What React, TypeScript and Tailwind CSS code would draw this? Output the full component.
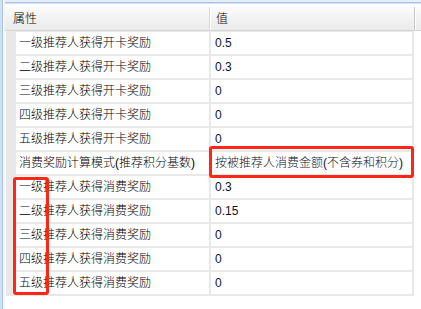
const rows: [string, string][] = [
  ["一级推荐人获得开卡奖励", "0.5"],
  ["二级推荐人获得开卡奖励", "0.3"],
  ["三级推荐人获得开卡奖励", "0"],
  ["四级推荐人获得开卡奖励", "0"],
  ["五级推荐人获得开卡奖励", "0"],
  ["消费奖励计算模式(推荐积分基数)", "按被推荐人消费金额(不含券和积分)"],
  ["一级推荐人获得消费奖励", "0.3"],
  ["二级推荐人获得消费奖励", "0.15"],
  ["三级推荐人获得消费奖励", "0"],
  ["四级推荐人获得消费奖励", "0"],
  ["五级推荐人获得消费奖励", "0"],
];

function Row({ name, value }: { name: string; value: string }) {
  return (
    <div className="flex h-[22px] gap-[2px]">
      <div className="flex w-[193px] items-center bg-white pl-[3px] text-black">{name}</div>
      <div className="flex w-[201px] items-center bg-white pl-[4px] text-[#10102a]">{value}</div>
    </div>
  );
}

export default function App() {
  return (
    <div
      className="relative flex h-[309px] w-[421px] overflow-hidden bg-white text-[12px] font-light leading-none"
      style={{ fontFamily: '"Liberation Sans", "Noto Sans CJK SC", sans-serif' }}
    >
      {/* window frame, left */}
      <div className="flex w-[5px] shrink-0">
        <div className="w-[2px] bg-[#d3e0f2]" />
        <div className="w-[1px] bg-[#a9c2e6]" />
        <div className="w-[2px] bg-[#f4f7fc]" />
      </div>

      <div className="flex flex-1 flex-col">
        {/* window frame, top */}
        <div className="flex h-[7px] shrink-0 flex-col">
          <div className="h-[2px] bg-[#e6eef9]" />
          <div className="h-[1px] bg-[#a9c2e6]" />
          <div className="h-[1px] bg-[#d3e0f2]" />
          <div className="flex-1 bg-white" />
        </div>

        {/* header */}
        <div className="flex h-[24px] shrink-0 border-b border-[#d5d5d5] bg-gradient-to-b from-[#fbfbfb] to-[#eaeaea]">
          <div className="flex w-[205px] items-center border-r border-[#d8d8d8] pl-[8px] text-black">属性</div>
          <div className="w-[1px] bg-white" />
          <div className="flex w-[204px] items-center border-r border-[#c8c8c8] pl-[5px] text-black">值</div>
          <div className="w-[1px] bg-white" />
        </div>

        {/* property rows */}
        <div className="ml-[1px] flex w-[408px] flex-col gap-[2px] bg-[#e8e8e8] pb-[2px] pl-[10px] pr-[2px] pt-[1px]">
          {rows.map(([n, v]) => (
            <Row key={n} name={n} value={v} />
          ))}
        </div>
      </div>

      {/* annotation boxes */}
      <div className="absolute left-[209px] top-[146px] h-[32px] w-[205px] rounded-[3px] border-[3px] border-[#ff2618]" />
      <div className="absolute left-[13px] top-[177px] h-[118px] w-[36px] rounded-[3px] border-[3px] border-[#ff2618]" />
    </div>
  );
}
